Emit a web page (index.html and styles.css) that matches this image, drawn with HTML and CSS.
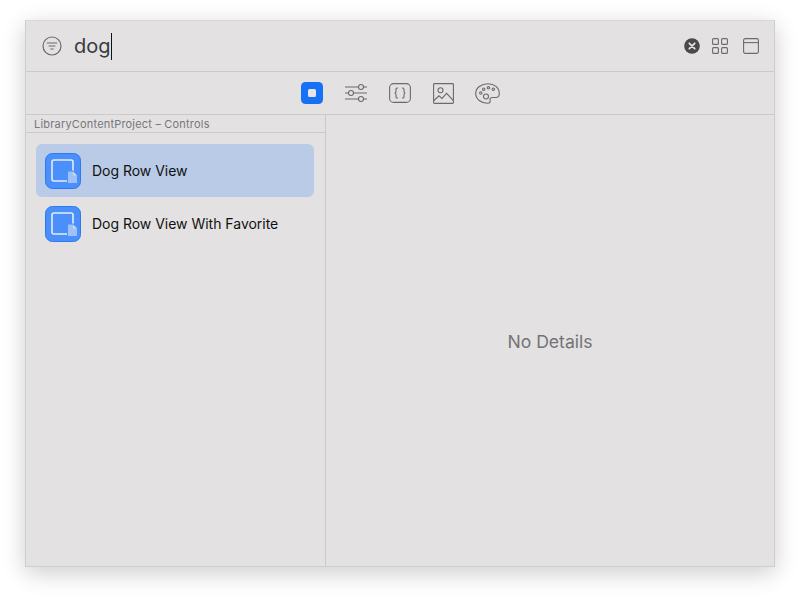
FILE: index.html
```html
<!DOCTYPE html>
<html lang="en">
  <head>
    <meta name="viewport" content="width=device-width, initial-scale=1.0">
    <link rel="stylesheet" href="styles.css">
  </head>
  <body>
    <main class="window">
      <header class="searchBar">
        <svg class="filterIcon" width="20" height="20" viewBox="0 0 20 20" fill="none" stroke="#6b6b6b" stroke-width="1.2">
          <circle cx="10" cy="10" r="9"/>
          <path d="M4.800 7h10.400M6.600 10h6.800M8.400 13h3.200"/>
        </svg>
        <span class="searchText">dog</span><span class="caret"></span>
        <div class="searchActions">
          <svg width="16" height="16" viewBox="0 0 16 16">
            <circle cx="8" cy="8" r="7.800" fill="#4a4a4c"/>
            <path d="M5.300 5.300l5.400 5.400M10.700 5.300l-5.400 5.400" stroke="#e3e1e2" stroke-width="1.800" stroke-linecap="round"/>
          </svg>
          <svg width="16" height="16" viewBox="0 0 16 16" fill="none" stroke="#6b6b6b" stroke-width="1.100">
            <rect x="0.600" y="0.600" width="5.800" height="5.800" rx="1"/>
            <rect x="9.600" y="0.600" width="5.800" height="5.800" rx="1"/>
            <rect x="0.600" y="9.600" width="5.800" height="5.800" rx="1"/>
            <rect x="9.600" y="9.600" width="5.800" height="5.800" rx="1"/>
          </svg>
          <svg class="paneIcon" width="16" height="16" viewBox="0 0 16 16" fill="none" stroke="#6b6b6b" stroke-width="1.100">
            <rect x="0.600" y="0.600" width="14.800" height="14.800" rx="1.600"/>
            <path d="M0.600 4.600h14.800"/>
          </svg>
        </div>
      </header>
      <nav class="tabBar">
        <svg width="22" height="22" viewBox="0 0 22 22">
          <rect width="22" height="22" rx="4.500" fill="#1572f5"/>
          <rect x="7" y="7" width="8" height="8" rx="1.500" fill="#e6e4e5"/>
        </svg>
        <svg width="22" height="20" viewBox="0 0 22 20" fill="none" stroke="#6b6b6b" stroke-width="1.100">
          <path d="M0 4h13.500M18.500 4H22M0 10h3.500M8.500 10H22M0 16h13.500M18.500 16H22"/>
          <circle cx="16" cy="4" r="2.500"/>
          <circle cx="6" cy="10" r="2.500"/>
          <circle cx="16" cy="16" r="2.500"/>
        </svg>
        <svg width="22" height="20" viewBox="0 0 22 20" fill="none" stroke="#6b6b6b" stroke-width="1.100">
          <rect x="0.600" y="0.600" width="20.800" height="18.800" rx="4"/>
          <path d="M9 5H8.300c-.9 0-1.300.5-1.300 1.300v2c0 .9-.4 1.500-1.200 1.700.8.200 1.200.8 1.200 1.700v2c0 .8.400 1.300 1.300 1.300H9M13 5h.7c.9 0 1.300.5 1.300 1.300v2c0 .9.400 1.500 1.200 1.700-.8.200-1.200.8-1.200 1.700v2c0 .8-.4 1.300-1.300 1.300H13"/>
        </svg>
        <svg width="21" height="21" viewBox="0 0 21 21" fill="none" stroke="#6b6b6b" stroke-width="1.100">
          <rect x="0.600" y="0.600" width="19.800" height="19.800" rx="0.800"/>
          <circle cx="7.500" cy="7.200" r="2.500"/>
          <path d="M1 17.500l5-4.700 3 2.600 4.600-5 6.800 7.200"/>
        </svg>
        <svg class="paletteIcon" width="25" height="21" viewBox="0 0 25 21" fill="none" stroke="#6b6b6b" stroke-width="1.100">
          <path d="M13 .8C6.200.8.700 4.900.700 10.500c0 5.600 5.500 9.800 11.800 9.800 2.400 0 3.100-1.300 2.600-2.700-.6-1.900.4-3.100 2.500-3.100h3.400c2.200 0 3.300-1.500 3.300-3.900C24.300 4.600 19.300.8 13 .8z"/>
          <circle cx="11" cy="13.500" r="2.500"/>
          <circle cx="5.800" cy="10" r="1.200"/>
          <circle cx="8.700" cy="6.200" r="1.200"/>
          <circle cx="13.500" cy="4.800" r="1.200"/>
          <circle cx="18.300" cy="6.200" r="1.200"/>
        </svg>
      </nav>
      <div class="content">
        <aside class="sidebar">
          <div class="sectionTitle">LibraryContentProject – Controls</div>
          <ul class="itemList">
            <li class="item selected">
              <svg width="36" height="36" viewBox="0 0 36 36">
                <use href="#viewIcon"/>
              </svg>
              Dog Row View
            </li>
            <li class="item">
              <svg width="36" height="36" viewBox="0 0 36 36">
                <use href="#viewIcon"/>
              </svg>
              Dog Row View With Favorite
            </li>
          </ul>
        </aside>
        <section class="details">No Details</section>
      </div>
    </main>
    <svg class="defs" width="0" height="0">
      <symbol id="viewIcon" viewBox="0 0 36 36">
        <rect x="0.500" y="0.500" width="35" height="35" rx="7" fill="#4b8ffb" stroke="#2f78f0"/>
        <rect x="7" y="7" width="21" height="21" rx="2" fill="none" stroke="#e4ecfb" stroke-width="1.600"/>
        <path d="M22 17.500h6.500l4.500 4.500v9H22z" fill="#4b8ffb"/>
        <path d="M23 18.500h5l4 4v7.500h-9z" fill="#a0c0f8"/>
        <path d="M28 18.500l4 4h-4z" fill="#c6d9fa"/>
      </symbol>
    </svg>
  </body>
</html>
```

FILE: styles.css
```css
body{
  margin: 0;
  height: 596px;
  box-sizing: border-box;
  padding: 20px 25px 0;
  overflow: hidden;
  background-color: white;
  font-family: "Inter", "Liberation Sans", sans-serif;
}
.window{
  display: flex;
  flex-direction: column;
  width: 750px;
  height: 547px;
  box-sizing: border-box;
  background-color: #e3e1e2;
  border: 1px solid #cfcdce;
  border-top-color: #d8d6d7;
  box-shadow: 0 6px 22px rgba(0, 0, 0, 0.2);
}
.searchBar{
  display: flex;
  align-items: center;
  height: 51px;
  flex-shrink: 0;
  box-sizing: border-box;
  padding: 0 15px 0 16px;
  border-bottom: 1px solid #cbc9ca;
}
.filterIcon{
  margin-right: 12px;
}
.searchText{
  font-size: 20px;
  color: #3a3a3c;
}
.caret{
  width: 1px;
  height: 27px;
  background-color: #111;
}
.searchActions{
  display: flex;
  align-items: center;
  gap: 12px;
  margin-left: auto;
}
.paneIcon{
  margin-left: 3px;
}
.tabBar{
  display: flex;
  align-items: center;
  justify-content: center;
  gap: 22px;
  height: 43px;
  flex-shrink: 0;
  box-sizing: border-box;
  padding-left: 1px;
  border-bottom: 1px solid #cbc9ca;
}
.paletteIcon{
  margin-left: -1px;
}
.content{
  display: flex;
  flex: 1;
  min-height: 0;
}
.sidebar{
  width: 300px;
  flex-shrink: 0;
  box-sizing: border-box;
  border-right: 1px solid #cbc9ca;
}
.sectionTitle{
  height: 18px;
  box-sizing: border-box;
  padding-left: 8px;
  font-size: 11px;
  line-height: 18px;
  letter-spacing: 0.19px;
  color: #77777a;
  border-bottom: 1px solid #cbc9ca;
}
.itemList{
  list-style-type: none;
  margin: 0;
  padding: 11px 11px 0 10px;
}
.item{
  display: flex;
  align-items: center;
  gap: 11px;
  height: 53px;
  padding-left: 9px;
  border-radius: 6px;
  font-size: 14px;
  letter-spacing: -0.02px;
  color: #111;
}
.selected{
  background-color: #b9cbe6;
}
.details{
  flex: 1;
  display: flex;
  align-items: center;
  justify-content: center;
  padding-top: 1px;
  font-size: 17.6px;
  color: #737378;
}
.defs{
  position: absolute;
}
```
